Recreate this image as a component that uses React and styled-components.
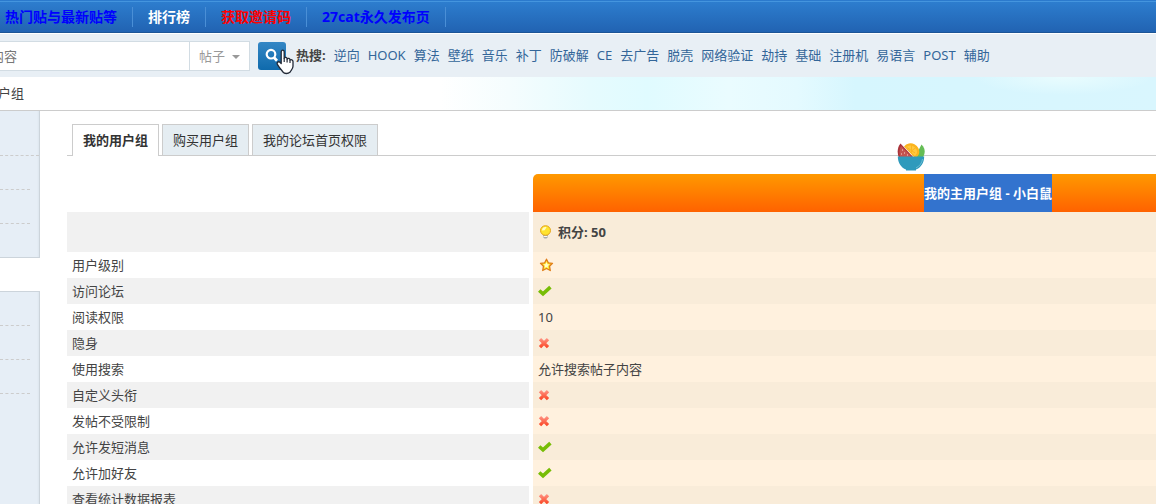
import React from 'react'
import styled, { createGlobalStyle } from 'styled-components'

const GlobalStyle = createGlobalStyle`

    * {
        box-sizing: border-box;
    }

    body {
        margin: 0;
        background: #fff;
        color: #444;
        font: 13px/26px "Noto Sans", "Noto Sans CJK SC", sans-serif;
    }

    html {
        scrollbar-width: none;
    }

    a {
        text-decoration: none;
    }

    ul {
        list-style: none;
        margin: 0;
        padding: 0;
    }
`

const Nav = styled.nav`

    height: 33px;
    border-bottom: 1px solid #1c5596;
    background: linear-gradient(#2b7acd 0, #2b7acd 1px, #4495de 1px, #4495de 2px, #2d7dce 2px, #2163b2 100%);

    ul {
        display: flex;
        padding-top: 7px;
    }

    li {
        height: 20px;
        padding: 0 15px;
        border-right: 1px solid #4a8fd6;
        line-height: 20px;
    }

    li:first-child {
        padding-left: 5px;
    }
`

const NavLink = styled.a`

    color: ${props => props.$color};
    font-size: 14px;
    font-weight: bold;
`

const SearchBar = styled.div`

    display: flex;
    margin-top: 1px;
    padding: 7px 0;
    height: 43px;
    background: #e8eff5;
`

const SearchForm = styled.form`

    position: relative;
    display: flex;
    flex: none;

    input {
        width: 190px;
        height: 30px;
        padding: 0;
        border: 1px solid #d2dce3;
        border-left: 0;
        background: #fff;
        font: inherit;
        text-indent: -9px;
        outline: none;
    }

    input::placeholder {
        color: #777;
    }

    button {
        display: flex;
        align-items: center;
        justify-content: center;
        width: 28px;
        height: 28px;
        margin-top: 1px;
        margin-left: 8px;
        padding: 0;
        border: 0;
        border-radius: 3px;
        background: linear-gradient(#3487c5, #0f6aac);
    }
`

const TypeSelect = styled.div`

    position: relative;

    select {
        width: 60px;
        height: 30px;
        padding: 0 9px;
        border: 1px solid #d2dce3;
        border-left: 0;
        border-radius: 0;
        background: #fff;
        color: #999;
        font: inherit;
        appearance: none;
    }

    svg {
        position: absolute;
        top: 14px;
        right: 10px;
        pointer-events: none;
    }
`

const Pointer = styled.svg`

    position: absolute;
    top: 8px;
    left: 275px;
    pointer-events: none;
`

const HotWords = styled.div`

    display: flex;
    gap: 8px;
    margin-left: 10px;
    line-height: 28px;
    white-space: nowrap;

    a {
        color: #336699;
    }
`

const Crumb = styled.div`

    height: 34px;
    border-bottom: 1px solid #ccc;
    background:
        radial-gradient(ellipse 90px 18px at 92% 0, #e9fcfe, transparent),
        linear-gradient(90deg, #fff 38%, #f5fdfe 44%, #e6fbfe 51%, #e0fbff 56%, #eafcff 63%, #e4faff 69%, #d6f6fe 74%, #d9f6fe 100%);
    line-height: 33px;

    a {
        margin-left: -2px;
        color: #444;
    }
`

const Layout = styled.div`

    display: grid;
    grid-template-columns: 40px minmax(0, 1fr);
    column-gap: 27px;
    overflow: hidden;
`

const SideBlock = styled.ul`

    margin-bottom: 33px;
    padding-top: ${props => props.$top};
    border: solid #ccd4db;
    border-width: ${props => props.$edge};
    background: linear-gradient(270deg, #dde6ee 0, #e6eef6 2px);

    li {
        height: 34px;
        margin-right: 9px;
        border-top: 1px dashed #ccc;
    }

    li.wide {
        margin-right: 0;
    }

    li:last-child {
        height: ${props => props.$last};
    }
`

const Main = styled.main`

    position: relative;
    min-width: 0;
    padding-top: 13px;
`

const Tabs = styled.ul`

    display: flex;
    gap: 3px;
    height: 32px;
    padding-left: 5px;
    border-bottom: 1px solid #ccc;
`

const Tab = styled.a`

    display: block;
    height: ${props => props.$active ? '32px' : '31px'};
    padding: 0 10px;
    border: 1px solid #ccc;
    border-bottom: 0;
    background: ${props => props.$active ? '#fff' : '#e5edf2'};
    color: #333;
    font-weight: ${props => props.$active ? 'bold' : 'normal'};
    line-height: 30px;
`

const GroupTable = styled.table`

    width: calc(100% + 287px);
    margin-top: 18px;
    border-collapse: separate;
    border-spacing: 0;
    table-layout: fixed;

    th, td {
        height: 26px;
        padding: 0 5px;
        text-align: left;
        font-weight: normal;
    }

    th:first-child {
        width: 466px;
        border-right: 4px solid #fff;
    }

    td {
        background: #fff1de;
    }

    tbody tr:nth-child(odd) th {
        background: #f1f1f1;
        background-clip: padding-box;
    }

    tbody tr:nth-child(odd) td {
        background: #f9ecd9;
    }

    tbody tr:first-child th, tbody tr:first-child td {
        height: 40px;
    }

    td svg {
        display: block;
    }
`

const GroupHead = styled.th`

    && {
        height: 38px;
        border-radius: 5px 0 0 0;
        background: linear-gradient(#ff9900, #ff6200);
        color: #fff;
        font-weight: bold;
        text-align: center;
    }

    span {
        display: inline-block;
        background: #3373ce;
        line-height: 38px;
        vertical-align: top;
    }
`

const Score = styled.strong`

    display: flex;
    align-items: center;
    gap: 6px;
`

const Bowl = styled.svg`

    position: absolute;
    top: 31px;
    left: 830px;
`

const SearchIcon = () => (
    <svg width="16" height="16" viewBox="0 0 16 16" fill="none" stroke="#fff">
        <circle cx="7" cy="6.2" r="4.3" strokeWidth="2.2" />
        <path d="M10 9.5l3 3.2" strokeWidth="2.8" />
    </svg>
)

const HandPointer = () => (
    <Pointer width="20" height="26" viewBox="0 0 20 26">
        <path
            d="M6.2 14.5V3.2C6.2.4 9.2.4 9.2 3.2V9.2C10 7.8 12.1 8.3 12.1 10C13 8.9 15 9.3 15 11C16 10.1 18 10.8 18 12.6V17.2C18 20 16 21.3 15.2 23C13 25 9.5 25 7.9 23C6.5 21 4.4 18.8 2.5 15.6C1.2 13.4 3.5 12 5 13.3Z"
            fill="#fff" stroke="#222936" strokeWidth="1.3" strokeLinejoin="round"
        />
        <path d="M9.2 9v4M12.1 10v3.5M15 11v3" stroke="#222936" strokeWidth="1.2" />
    </Pointer>
)

const Bulb = () => (
    <svg width="14" height="14" viewBox="0 0 14 14">
        <path d="M5 9.5h5v2.5L8.5 13.5h-2L5 12Z" fill="#a9a9a9" />
        <path d="M5.5 11.5h4" stroke="#f7f7f7" />
        <ellipse cx="7.5" cy="5.5" rx="5" ry="4.8" fill="#ffe32e" stroke="#e5a51c" />
        <path d="M4 5.5C4 3 5.8 1.8 8.6 2.2L6.6 5.2Z" fill="#fffbc4" />
    </svg>
)

const Star = () => (
    <svg width="16" height="14" viewBox="0 0 16 14">
        <path d="M8.5 1.2l1.8 3.6 4.2.5-3 2.9.8 4.3-3.8-2-3.8 2 .8-4.3-3-2.9 4.2-.5Z" fill="#ffe92e" stroke="#df7c18" strokeWidth="1.3" strokeLinejoin="round" />
        <path d="M8.5 4l.9 2.2 2 .3-1.7 1.6.2 1.8-1.5-.8-1.8.7.4-2-1.5-1.2 2-.3Z" fill="#fffccf" />
    </svg>
)

const Check = () => (
    <svg width="14" height="12" viewBox="0 0 14 12">
        <path d="M1.2 5.5L5 8.8L12.4 2.2" fill="none" stroke="#77bd06" strokeWidth="3.6" />
    </svg>
)

const Cross = () => (
    <svg width="12" height="12" viewBox="0 0 12 12">
        <defs>
            <linearGradient id="cross" x1="0" y1="1" x2="0" y2="11" gradientUnits="userSpaceOnUse">
                <stop offset="0" stopColor="#ff9788" />
                <stop offset="1" stopColor="#fb4322" />
            </linearGradient>
        </defs>
        <path d="M2 2.2l8 8M10 2.2l-8 8" stroke="url(#cross)" strokeWidth="3.3" />
    </svg>
)

const FruitBowl = () => (
    <Bowl width="28" height="30" viewBox="0 0 28 30">
        <path d="M3.5 1.5L17 16H2C-.3 10 .5 5 3.5 1.5Z" fill="#a9333a" />
        <path d="M24.5 2.5C29 7 28 12 26 15H18Z" fill="#65bd55" />
        <path d="M7 4.5A8.6 8.6 0 0 1 22 12L20 15H17Z" fill="#fbb41f" />
        <path d="M9 5.2A6.7 6.7 0 0 1 20 11L18 14Z" fill="#ffc83e" />
        <path d="M14.5 2.5v8M10 5.5l8 5.5M19.5 5l-5 4" stroke="#fbb41f" />
        <path d="M4 4L15 15H3C2 11 2.2 7 4 4Z" fill="#c4534f" />
        <path d="M5 8h1M7 11h1M4 12h1M10 13h1" stroke="#f6d9d2" />
        <path d="M.8 14.5H27.2C27.2 21 23.7 25.8 19 27.5V28.5H9V27.5C4.3 25.8.8 21 .8 14.5Z" fill="#2e9abc" />
        <path d="M25.5 17C25 21 22.5 24.3 19 26" fill="none" stroke="#7cc4d7" strokeWidth=".8" />
    </Bowl>
)

const navItems = [
    { text: '热门贴与最新贴等', color: '#0000ff' },
    { text: '排行榜', color: '#fff' },
    { text: '获取邀请码', color: '#ff0000' },
    { text: '27cat永久发布页', color: '#0000ff' },
]

const hotWords = ['逆向', 'HOOK', '算法', '壁纸', '音乐', '补丁', '防破解', 'CE', '去广告', '脱壳', '网络验证', '劫持', '基础', '注册机', '易语言', 'POST', '辅助']

const tabs = ['我的用户组', '购买用户组', '我的论坛首页权限']

const rows = [
    { label: '', value: <Score><Bulb />积分: 50</Score> },
    { label: '用户级别', value: <Star /> },
    { label: '访问论坛', value: <Check /> },
    { label: '阅读权限', value: '10' },
    { label: '隐身', value: <Cross /> },
    { label: '使用搜索', value: '允许搜索帖子内容' },
    { label: '自定义头衔', value: <Cross /> },
    { label: '发帖不受限制', value: <Cross /> },
    { label: '允许发短消息', value: <Check /> },
    { label: '允许加好友', value: <Check /> },
    { label: '查看统计数据报表', value: <Cross /> },
]

const App = () => {

    return (
        <>
            <GlobalStyle />
            <Nav>
                <ul>
                    {navItems.map(item => (
                        <li key={item.text}><NavLink href="#" $color={item.color}>{item.text}</NavLink></li>
                    ))}
                </ul>
            </Nav>
            <SearchBar>
                <SearchForm onSubmit={e => e.preventDefault()}>
                    <input type="text" placeholder="内容" aria-label="内容" />
                    <TypeSelect>
                        <select aria-label="帖子">
                            <option>帖子</option>
                        </select>
                        <svg width="8" height="4" viewBox="0 0 8 4"><path d="M0 0h8L4 4Z" fill="#999" /></svg>
                    </TypeSelect>
                    <button type="submit" aria-label="搜索"><SearchIcon /></button>
                    <HandPointer />
                </SearchForm>
                <HotWords>
                    <strong>热搜:</strong>
                    {hotWords.map(word => <a href="#" key={word}>{word}</a>)}
                </HotWords>
            </SearchBar>
            <Crumb><a href="#">户组</a></Crumb>
            <Layout>
                <aside>
                    <SideBlock $top="44px" $edge="0 1px 1px 0" $last="34px">
                        <li className="wide" />
                        <li />
                        <li />
                    </SideBlock>
                    <SideBlock $top="33px" $edge="1px 1px 0 0" $last="111px">
                        <li />
                        <li />
                        <li />
                    </SideBlock>
                </aside>
                <Main>
                    <Tabs>
                        {tabs.map((tab, i) => (
                            <li key={tab}><Tab href="#" $active={i === 0}>{tab}</Tab></li>
                        ))}
                    </Tabs>
                    <FruitBowl />
                    <GroupTable>
                        <thead>
                            <tr>
                                <th />
                                <GroupHead scope="col"><span>我的主用户组 - 小白鼠</span></GroupHead>
                            </tr>
                        </thead>
                        <tbody>
                            {rows.map(row => (
                                <tr key={row.label}>
                                    <th scope="row">{row.label}</th>
                                    <td>{row.value}</td>
                                </tr>
                            ))}
                        </tbody>
                    </GroupTable>
                </Main>
            </Layout>
        </>
    )
}

export default App
